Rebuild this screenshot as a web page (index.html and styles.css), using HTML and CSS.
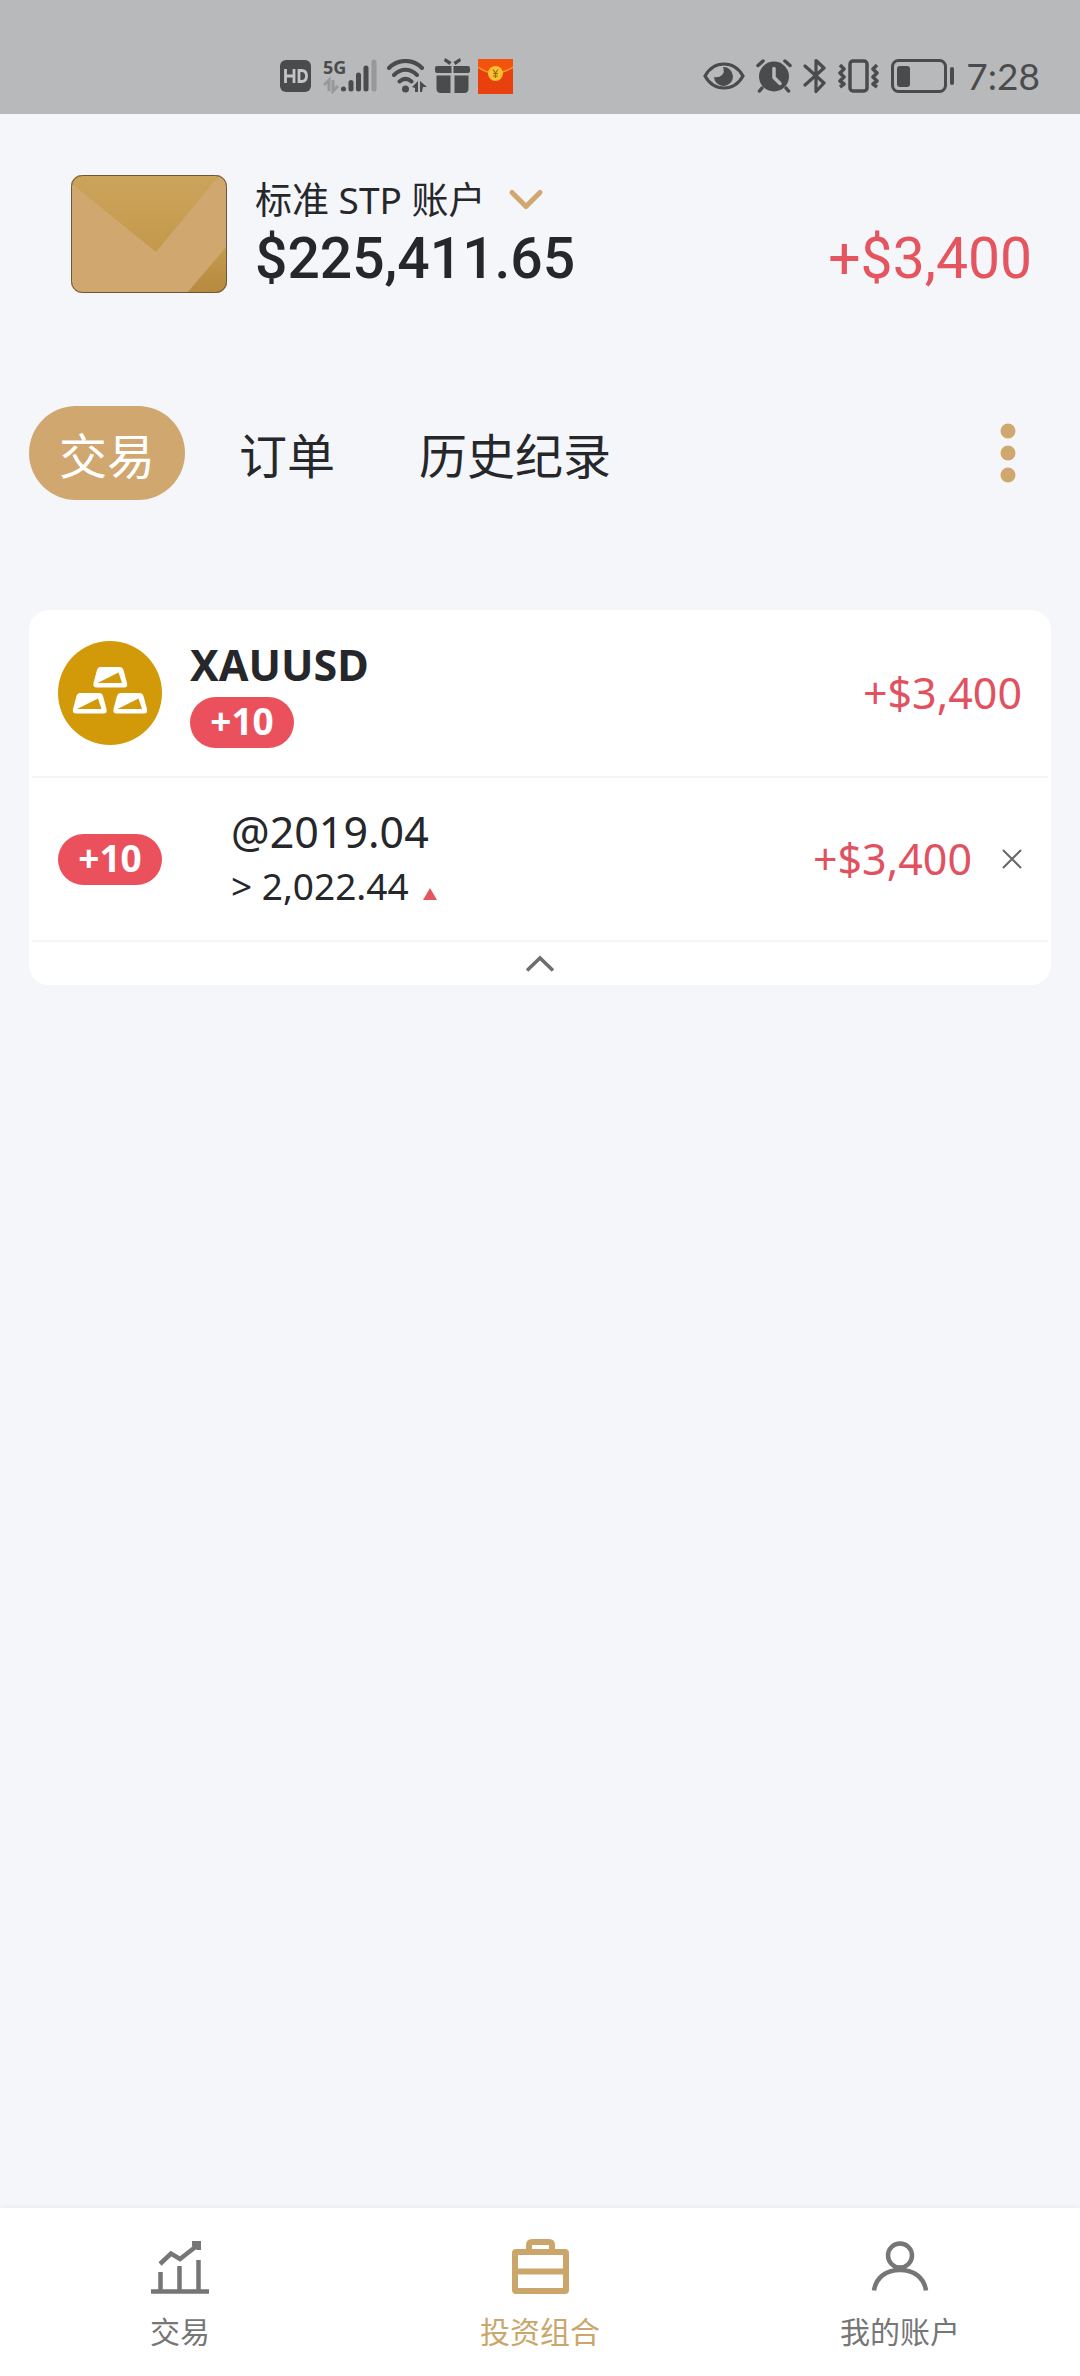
FILE: index.html
```html
<!DOCTYPE html>
<html lang="zh-CN">
<head>
<meta charset="utf-8">
<meta name="viewport" content="width=device-width, initial-scale=1">
<title>投资组合</title>
<link rel="stylesheet" href="styles.css">
</head>
<body>
<header class="status">
  <div class="status-group">
    <svg width="36" height="32" viewBox="0 0 36 32" aria-hidden="true"><rect width="31" height="32" rx="6" fill="#4a4b4d"/><path d="M5.500 9v14M14 9v14M5.500 16H14M19 10.500v11h2.500c3.500 0 5-2 5-5.500s-1.500-5.500-5-5.500z" fill="none" stroke="#c4c5c7" stroke-width="2.800"/></svg>
    <div class="signal">
      <span class="signal-type">5G</span>
      <svg width="56" height="36" viewBox="0 0 56 36" aria-hidden="true">
        <path d="M1 27l5-5v11M10 22v11l5-5" fill="none" stroke="#97989a" stroke-width="3"/>
        <g stroke="#4a4b4d" stroke-width="5" stroke-linecap="round"><path d="M20.500 31v0M28 24.500v6.500M35.500 17v14M43 10v21"/><path d="M51 4v27" stroke="#97989a"/></g>
      </svg>
    </div>
    <svg width="42" height="34" viewBox="0 0 42 34" aria-hidden="true"><g fill="none" stroke="#4a4b4d" stroke-width="4" stroke-linecap="round"><path d="M3 9C12-.5 27-.5 36 9M8 16c7-7 16-7 23 0M13.500 22.500c4-3.500 8-3.500 12 0"/></g><circle cx="19.500" cy="30" r="3.500" fill="#4a4b4d"/><path d="M26 28l6-6v11h-3v-4zM34 22l7 6h-4l-1 5h-2z" fill="#4a4b4d"/></svg>
    <svg width="36" height="36" viewBox="0 0 36 36" aria-hidden="true"><g fill="#4a4b4d"><path d="M2 8h14.500v7H2q-2 0-2-2v-3q0-2 2-2zM18.500 8H33q2 0 2 2v3q0 2-2 2H18.500zM1.500 17.500h14V35H6q-4.500 0-4.500-4.500zM19.500 17.500h14v13q0 4.500-4.500 4.500h-9.500z"/><path d="M10 0l6.500 4-2 3L9 3zM25 0l-6.500 4 2 3L26 3z"/></g></svg>
    <svg width="35" height="35" viewBox="0 0 35 35" aria-hidden="true"><rect width="35" height="35" fill="#ea400d"/><path d="M0 0h35v8q-17.500 12-35 0z" fill="#f2540f"/><path d="M0 8q17.500 12 35 0" fill="none" stroke="#f29a2d" stroke-width="1.500"/><circle cx="17.500" cy="14.500" r="7.500" fill="#f7c331"/><path d="M15 10.500l2.500 3.500 2.500-3.500M17.500 14v5M15 14.500h5M15 17h5" fill="none" stroke="#a9640f" stroke-width="1.200"/></svg>
  </div>
  <div class="status-group status-system">
    <svg width="42" height="28" viewBox="0 0 42 28" aria-hidden="true"><path d="M2 14C11-2 31-2 40 14 31 30 11 30 2 14z" fill="none" stroke="#4a4b4d" stroke-width="3.200"/><path d="M20 5a9.500 9.500 0 1 1-9 10q5 1 8-2t1-8z" fill="#4a4b4d"/></svg>
    <svg width="36" height="34" viewBox="0 0 36 34" aria-hidden="true"><circle cx="18" cy="17.500" r="15" fill="#4a4b4d"/><path d="M2 6.500l5-4.500M34 6.500L29 2M6 29l-2.500 3M30 29l2.500 3" stroke="#4a4b4d" stroke-width="3.500" stroke-linecap="round"/><path d="M18 9.500v9l6 6" fill="none" stroke="#b8b9bb" stroke-width="3.500" stroke-linecap="round"/></svg>
    <svg width="24" height="36" viewBox="0 0 24 36" aria-hidden="true"><path d="M2 8l19 17-8 8.500V2.500L21 10 2 27" fill="none" stroke="#4a4b4d" stroke-width="3.200" stroke-linejoin="round" stroke-linecap="round"/></svg>
    <svg width="42" height="34" viewBox="0 0 42 34" aria-hidden="true"><g fill="none" stroke="#4a4b4d" stroke-width="3.500" stroke-linejoin="round"><rect x="12" y="2" width="17" height="30" rx="3"/><path d="M2 6l4 4-4 4 4 4-4 4 4 3-4 3M39 6l-4 4 4 4-4 4 4 4-4 3 4 3"/></g></svg>
    <svg width="64" height="34" viewBox="0 0 64 34" aria-hidden="true"><rect x="1.500" y="1.500" width="53" height="31" rx="6" fill="none" stroke="#4a4b4d" stroke-width="3"/><rect x="6" y="7" width="13" height="21" rx="3" fill="#4a4b4d"/><path d="M61 10v14" stroke="#4a4b4d" stroke-width="4" stroke-linecap="round"/></svg>
    <time class="clock">7:28</time>
  </div>
</header>

<section class="account">
  <svg width="156" height="118" viewBox="0 0 156 118" aria-hidden="true">
    <defs>
      <linearGradient id="flap" x1="0" y1="0" x2="0" y2="1"><stop offset="0" stop-color="#cca35b"/><stop offset="1" stop-color="#c39a4b"/></linearGradient>
      <linearGradient id="fold" x1="0" y1="0" x2="0" y2="1"><stop offset="0" stop-color="#c49b50"/><stop offset="1" stop-color="#b68a3f"/></linearGradient>
      <clipPath id="card"><rect width="156" height="118" rx="11"/></clipPath>
    </defs>
    <g clip-path="url(#card)"><rect width="156" height="118" fill="#d0a76e"/><path d="M0 0h150l-8 8-57 69L0 8z" fill="url(#flap)"/><path d="M116 118l40-47v47z" fill="url(#fold)"/></g>
    <rect x=".5" y=".5" width="155" height="117" rx="11" fill="none" stroke="#66583d"/>
  </svg>
  <div class="account-info">
    <button class="account-switch" type="button">标准 STP 账户
      <svg width="36" height="24" viewBox="0 0 36 24" aria-hidden="true"><path d="M4 4.500l14 14 14-14" fill="none" stroke="#d0a76e" stroke-width="5" stroke-linecap="round" stroke-linejoin="round"/></svg>
    </button>
    <div class="balance">$225,411.65</div>
  </div>
  <div class="profit">+$3,400</div>
</section>

<nav class="tabs">
  <button class="tab tab-active" type="button">交易</button>
  <button class="tab" type="button">订单</button>
  <button class="tab" type="button">历史纪录</button>
  <button class="more" type="button" aria-label="更多">
    <svg width="16" height="60" viewBox="0 0 16 60" aria-hidden="true"><g fill="#d0a76e"><circle cx="8" cy="8" r="7.500"/><circle cx="8" cy="30" r="7.500"/><circle cx="8" cy="52" r="7.500"/></g></svg>
  </button>
</nav>

<main class="content">
  <article class="position">
    <div class="row">
      <svg width="104" height="104" viewBox="0 0 104 104" aria-hidden="true"><circle cx="52" cy="52" r="52" fill="#d29a08"/>
        <g fill="#fff"><path id="ingot" d="M42.500 26h19q3 0 4 3l3.500 13q1 4.500-3 4.500H39q-4.500 0-3.500-4.500L39 29q1-3 3.500-3z"/><use href="#ingot" x="-20.500" y="26"/><use href="#ingot" x="20" y="26"/></g>
        <g fill="#d29a08"><path id="face" d="M39.500 42l21-10.500 3.500 10.500z"/><use href="#face" x="-20.500" y="26"/><use href="#face" x="20" y="26"/></g>
      </svg>
      <div class="symbol">
        <h2 class="symbol-name">XAUUSD</h2>
        <span class="lots">+10</span>
      </div>
      <span class="gain">+$3,400</span>
    </div>
    <div class="row row-trade">
      <span class="lots">+10</span>
      <div class="trade">
        <div class="trade-open">@2019.04</div>
        <div class="trade-now">&gt; 2,022.44 <svg width="14" height="12" viewBox="0 0 14 12" aria-hidden="true"><path d="M7 0l7 12H0z" fill="#e5555f"/></svg></div>
      </div>
      <span class="gain">+$3,400</span>
      <button class="close" type="button" aria-label="平仓">
        <svg width="20" height="20" viewBox="0 0 20 20" aria-hidden="true"><path d="M1 1l18 18M19 1L1 19" stroke="#66676a" stroke-width="2"/></svg>
      </button>
    </div>
    <button class="collapse" type="button" aria-label="收起">
      <svg width="30" height="18" viewBox="0 0 30 18" aria-hidden="true"><path d="M2 15.500L15 3l13 12.500" fill="none" stroke="#6c6d70" stroke-width="3.500"/></svg>
    </button>
  </article>
</main>

<nav class="bottom">
  <a class="bottom-item" href="#trade">
    <svg width="58" height="58" viewBox="0 0 58 58" aria-hidden="true"><g fill="none" stroke="#767676" stroke-width="4.500"><path d="M0 52.500h58M9.500 33v19M28.500 27v25M47.500 21v31"/><path d="M9 25l11-10.500 9 5.500L45 7.500"/></g><path d="M41 2h9v9h-4l-5-4z" fill="#767676"/></svg>
    <span>交易</span>
  </a>
  <a class="bottom-item bottom-active" href="#portfolio" aria-current="page">
    <svg width="58" height="58" viewBox="0 0 58 58" aria-hidden="true"><g fill="none" stroke="#cba66b" stroke-width="6"><rect x="4" y="13" width="51" height="39" rx="1"/><path d="M4 32.500h51M18 13V6q0-3 3-3h17q3 0 3 3v7"/></g></svg>
    <span>投资组合</span>
  </a>
  <a class="bottom-item" href="#account">
    <svg width="58" height="58" viewBox="0 0 58 58" aria-hidden="true"><g fill="none" stroke="#767676" stroke-width="4.500"><circle cx="29" cy="16.500" r="12"/><path d="M3 51.500C5 38.500 15 31 29 31S53 38.500 55 51.500"/></g></svg>
    <span>我的账户</span>
  </a>
</nav>
</body>
</html>
```
FILE: styles.css
```css
* {
  box-sizing: border-box;
}

body {
  margin: 0;
  min-height: 100vh;
  display: flex;
  flex-direction: column;
  background: #f5f6fa;
  color: #25272b;
  font-family: "Noto Sans", "Noto Sans CJK SC", sans-serif;
}

button {
  margin: 0;
  padding: 0;
  border: 0;
  background: none;
  color: inherit;
  font: inherit;
  cursor: pointer;
}

svg {
  display: block;
  flex: none;
}

/* System status bar */
.status {
  height: 114px;
  padding: 38px 40px 0 280px;
  display: flex;
  justify-content: space-between;
  background: #b8b9bb;
  color: #4a4b4d;
}

.status-group {
  display: flex;
  align-items: center;
  gap: 7px;
}

.status-system {
  gap: 11px;
}

.signal {
  display: grid;
}

.signal > * {
  grid-area: 1 / 1;
}

.signal-type {
  font: 700 18px/18px "Open Sans", sans-serif;
}

.clock {
  font-family: Lato, "Noto Sans", sans-serif;
  font-size: 37px;
  line-height: 36px;
}

/* Account summary */
.account {
  padding: 61px 48px 0 71px;
  display: flex;
  align-items: flex-end;
}

.account-info {
  margin-left: 28px;
  flex: 1;
}

.account-switch {
  display: flex;
  align-items: center;
  gap: 22px;
  font-size: 37px;
  line-height: 50px;
}

.balance,
.profit {
  font-family: Roboto, "Noto Sans", sans-serif;
  font-size: 57px;
  line-height: 68px;
}

.balance {
  font-weight: 500;
}

.profit {
  color: #e5555f;
}

/* Section tabs */
.tabs {
  margin-top: 113px;
  padding: 0 64px 0 29px;
  display: flex;
  align-items: center;
  gap: 24px;
}

.tab {
  height: 94px;
  padding: 6px 30px 0;
  border-radius: 47px;
  font-size: 48px;
  line-height: 88px;
}

.tab-active {
  background: #d0a76e;
  color: #fff;
}

.more {
  margin-left: auto;
}

/* Open positions */
.content {
  flex: 1;
  padding: 110px 29px 0;
}

.position {
  padding: 0 3px;
  border-radius: 20px;
  background: #fff;
}

.row {
  height: 168px;
  padding: 0 26px;
  display: flex;
  align-items: center;
  border-bottom: 2px solid #f5f5f6;
}

.row-trade {
  height: 164px;
}

.symbol {
  margin-left: 28px;
  display: flex;
  flex-direction: column;
  align-items: flex-start;
  gap: 5px;
}

.symbol-name {
  margin: 0;
  font-size: 43px;
  font-weight: 700;
  line-height: 54px;
}

.lots {
  width: 104px;
  height: 51px;
  border-radius: 26px;
  background: #eb515d;
  color: #fff;
  font-size: 37px;
  font-weight: 700;
  line-height: 48px;
  text-align: center;
}

.gain {
  margin-left: auto;
  color: #e0525f;
  font-size: 43px;
  line-height: 54px;
}

.trade {
  margin-left: 69px;
  line-height: 54px;
}

.trade-open {
  font-size: 43px;
}

.trade-now {
  display: flex;
  align-items: baseline;
  gap: 14px;
  font-size: 37px;
}

.close {
  margin-left: 30px;
}

.collapse {
  width: 100%;
  height: 43px;
  display: flex;
  align-items: center;
  justify-content: center;
}

/* Bottom navigation */
.bottom {
  height: 168px;
  padding-top: 31px;
  display: grid;
  grid-template-columns: repeat(3, 1fr);
  background: #fff;
  box-shadow: 0 0 6px rgba(40, 50, 80, 0.08);
}

.bottom-item {
  display: flex;
  flex-direction: column;
  align-items: center;
  gap: 15px;
  color: #767676;
  font-size: 30px;
  line-height: 40px;
  text-decoration: none;
}

.bottom-active {
  color: #cba66b;
}
```
